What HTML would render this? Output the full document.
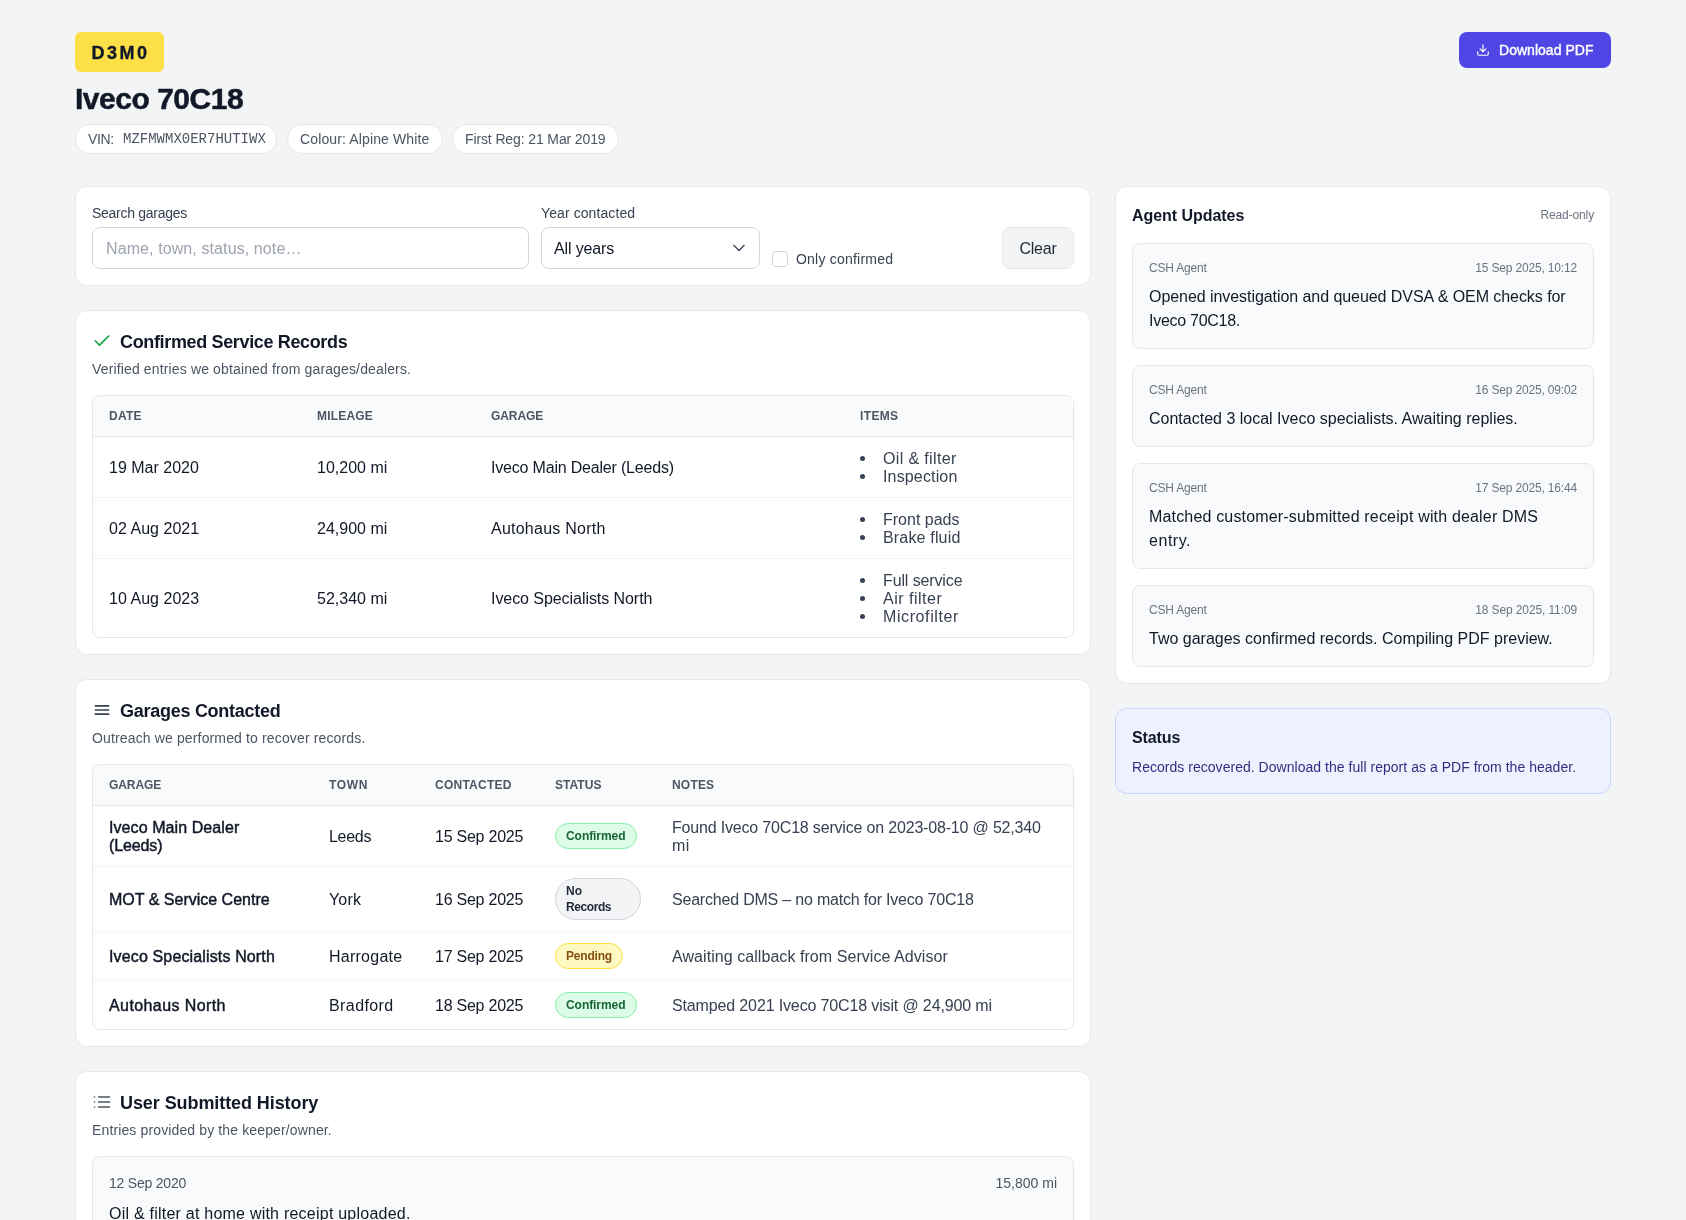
<!DOCTYPE html>
<html lang="en"><head>
<meta charset="utf-8">
<title>Iveco 70C18</title>
<style>
*{box-sizing:border-box;margin:0;padding:0}
html,body{width:1686px;height:1220px;overflow:hidden}
body{background:#f3f4f6;font-family:"Liberation Sans",sans-serif;color:#111827;line-height:1.5;-webkit-font-smoothing:antialiased;position:relative}
.abs{position:absolute}
.page{position:absolute;left:75px;top:0;width:1536px;height:1220px;will-change:transform}
.plate{position:absolute;left:0;top:32px;width:89px;height:40px;background:#fde047;border-radius:6px;font-weight:700;font-size:18px;letter-spacing:2.5px;line-height:42px;text-align:center;color:#111827;padding-left:2px;-webkit-text-stroke:0.35px #111827}
.h1{position:absolute;left:0;top:81px;font-size:30px;line-height:36px;font-weight:700;color:#111827;white-space:nowrap;-webkit-text-stroke:0.5px #111827}
.chip{position:absolute;top:124px;height:30px;border:1px solid #e5e7eb;background:#fff;border-radius:9999px;font-size:14px;line-height:28px;color:#4b5563;white-space:nowrap}
.chip>span{position:absolute;top:0}
.mono{font-family:"Liberation Mono",monospace;font-size:14px;color:#4b5563}
.dl{position:absolute;left:1384px;top:32px;width:152px;height:36px;background:#4f46e5;border-radius:8px;color:#fff;font-size:14px;font-weight:400;-webkit-text-stroke:0.4px #fff;line-height:36px;white-space:nowrap}
.dl svg{position:absolute;left:16.5px;top:10.5px}
.dl>span{position:absolute;left:40px;top:0}
.card{position:absolute;background:#fff;border:1px solid #e5e7eb;border-radius:12px;overflow:hidden}
.lbl{position:absolute;font-size:14px;line-height:20px;color:#374151;white-space:nowrap}
.inp{position:absolute;height:42px;border:1px solid #d1d5db;border-radius:8px;background:#fff;font-size:16px;line-height:42px;white-space:nowrap}
.btn{position:absolute;height:42px;border:1px solid #e5e7eb;border-radius:8px;background:#f3f4f6;font-size:16px;line-height:42px;color:#1f2937;text-align:center}
.cb{position:absolute;width:16px;height:16px;border:1px solid #d1d5db;border-radius:4px;background:#fff}
.ctitle{position:absolute;left:44px;top:17px;font-size:18px;line-height:28px;font-weight:700;color:#111827;white-space:nowrap}
.csub{position:absolute;left:16px;top:48px;font-size:14px;line-height:20px;color:#4b5563;white-space:nowrap}
.icon{position:absolute;left:16px;top:20px}
.tbl{position:absolute;left:16px;top:84px;width:982px;border:1px solid #e5e7eb;border-radius:8px;overflow:hidden}
.th{position:relative;height:41px;background:#f9fafb;border-bottom:1px solid #e5e7eb}
.th>div{position:absolute;top:12px;font-size:12px;line-height:16px;font-weight:700;letter-spacing:0.6px;color:#4b5563;white-space:nowrap}
.tr{position:relative;border-bottom:1px solid #f3f4f6}
.tr.last{border-bottom:0}
.td{position:absolute;margin-top:1px;font-size:16px;line-height:18px;color:#111827;white-space:nowrap}
.items{position:absolute;margin-top:1px;font-size:16px;line-height:18px;color:#374151;white-space:nowrap}
.items>div{position:relative;padding-left:23px}
.items>div:before{content:"";position:absolute;left:0px;top:6px;width:5px;height:5px;border-radius:50%;background:#374151}
.badge{position:absolute;border-radius:9999px;font-size:12px;line-height:16px;font-weight:700;white-space:nowrap;border:1px solid}
.b-ok{background:#dcfce7;border-color:#86efac;color:#166534}
.b-pend{background:#fef9c3;border-color:#fde047;color:#854d0e}
.b-none{background:#f3f4f6;border-color:#d1d5db;color:#1f2937}
.note{position:absolute;margin-top:1px;font-size:16px;line-height:18px;color:#374151;white-space:nowrap}
.gname{position:absolute;margin-top:1px;font-size:16px;line-height:18px;color:#111827;font-weight:400;-webkit-text-stroke:0.45px #111827;white-space:nowrap}
.ubox{position:absolute;background:#f9fafb;border:1px solid #e5e7eb;border-radius:8px}
.meta{position:absolute;top:16px;font-size:12px;line-height:16px;color:#6b7280;white-space:nowrap}
.msg{position:absolute;left:16px;top:41px;font-size:16px;line-height:24px;color:#111827;white-space:nowrap}
</style>
</head>
<body>
<div class="page">
  <div class="plate">D3M0</div>
  <div class="h1"><span style="letter-spacing: -0.48px;">Iveco 70C18</span></div>
  <div class="chip" style="left:0;width:202px"><span style="left:12px"><span style="letter-spacing: -0.33px;">VIN:</span></span><span class="mono" style="left:47px">MZFMWMX0ER7HUTIWX</span></div>
  <div class="chip" style="left:212px;width:156px"><span style="left:12px"><span style="letter-spacing: 0.13px;">Colour: Alpine White</span></span></div>
  <div class="chip" style="left:377px;width:167px"><span style="left:12px"><span style="letter-spacing: -0.12px;">First Reg: 21 Mar 2019</span></span></div>
  <div class="dl"><svg width="14" height="14" viewBox="0 0 24 24" fill="none" stroke="#fff" stroke-width="2" stroke-linecap="round" stroke-linejoin="round"><path d="M21 15v4a2 2 0 0 1-2 2H5a2 2 0 0 1-2-2v-4M7 10l5 5 5-5M12 15V3"></path></svg><span><span style="letter-spacing: 0.03px;">Download PDF</span></span></div>

  <!-- Filter card -->
  <div class="card" style="left:0;top:186px;width:1016px;height:100px">
    <div class="lbl" style="left:16px;top:16px"><span style="letter-spacing: -0.28px;">Search garages</span></div>
    <div class="inp" style="left:16px;top:40px;width:437px;padding-left:13px;color:#9ca3af"><span style="letter-spacing: 0.1px;">Name, town, status, note…</span></div>
    <div class="lbl" style="left:465px;top:16px"><span style="letter-spacing: 0.09px;">Year contacted</span></div>
    <div class="inp" style="left:465px;top:40px;width:219px;padding-left:12px;color:#111827"><span style="letter-spacing: -0.13px;">All years
      </span><svg class="abs" style="left:187px;top:10px" width="20" height="20" viewBox="0 0 24 24" fill="none" stroke="#4b5563" stroke-width="2" stroke-linecap="round" stroke-linejoin="round"><path d="M6 9l6 6 6-6"></path></svg>
    </div>
    <div class="cb" style="left:696px;top:64px"></div>
    <div class="lbl" style="left:720px;top:62px"><span style="letter-spacing: 0.22px;">Only confirmed</span></div>
    <div class="btn" style="left:926px;top:40px;width:72px"><span style="letter-spacing: -0.22px;">Clear</span></div>
  </div>

  <!-- Confirmed Service Records -->
  <div class="card" style="left:0;top:310px;width:1016px;height:345px">
    <svg class="icon" width="20" height="20" viewBox="0 0 24 24" fill="none" stroke="#16a34a" stroke-width="2" stroke-linecap="round" stroke-linejoin="round"><path d="M20 6L9 17l-5-5"></path></svg>
    <div class="ctitle"><span style="letter-spacing: -0.35px;">Confirmed Service Records</span></div>
    <div class="csub"><span style="letter-spacing: 0.14px;">Verified entries we obtained from garages/dealers.</span></div>
    <div class="tbl" style="height:243px">
      <div class="th">
        <div style="left:16px"><span style="letter-spacing: 0.25px;">DATE</span></div>
        <div style="left:224px"><span style="letter-spacing: 0.18px;">MILEAGE</span></div>
        <div style="left:398px"><span style="letter-spacing: -0.08px;">GARAGE</span></div>
        <div style="left:767px"><span style="letter-spacing: 0.36px;">ITEMS</span></div>
      </div>
      <div class="tr" style="height:61px">
        <div class="td" style="left:16px;top:21px">19 Mar 2020</div>
        <div class="td" style="left:224px;top:21px">10,200 mi</div>
        <div class="td" style="left:398px;top:21px"><span style="letter-spacing: -0.19px;">Iveco Main Dealer (Leeds)</span></div>
        <div class="items" style="left:767px;top:12px"><div><span style="letter-spacing: 0.36px;">Oil &amp; filter</span></div><div><span style="letter-spacing: 0.15px;">Inspection</span></div></div>
      </div>
      <div class="tr" style="height:61px">
        <div class="td" style="left:16px;top:21px"><span style="letter-spacing: 0.03px;">02 Aug 2021</span></div>
        <div class="td" style="left:224px;top:21px">24,900 mi</div>
        <div class="td" style="left:398px;top:21px"><span style="letter-spacing: 0.24px;">Autohaus North</span></div>
        <div class="items" style="left:767px;top:12px"><div>Front pads</div><div><span style="letter-spacing: 0.17px;">Brake fluid</span></div></div>
      </div>
      <div class="tr last" style="height:78px">
        <div class="td" style="left:16px;top:30px"><span style="letter-spacing: 0.03px;">10 Aug 2023</span></div>
        <div class="td" style="left:224px;top:30px">52,340 mi</div>
        <div class="td" style="left:398px;top:30px"><span style="letter-spacing: -0.06px;">Iveco Specialists North</span></div>
        <div class="items" style="left:767px;top:12px"><div><span style="letter-spacing: -0.12px;">Full service</span></div><div><span style="letter-spacing: 0.51px;">Air filter</span></div><div><span style="letter-spacing: 0.6px;">Microfilter</span></div></div>
      </div>
    </div>
  </div>

  <!-- Garages Contacted -->
  <div class="card" style="left:0;top:679px;width:1016px;height:368px">
    <svg class="icon" width="20" height="20" viewBox="0 0 24 24" fill="none" stroke="#374151" stroke-width="2" stroke-linecap="round" stroke-linejoin="round"><path d="M4 7h16M4 12h16M4 17h16"></path></svg>
    <div class="ctitle"><span style="letter-spacing: -0.27px;">Garages Contacted</span></div>
    <div class="csub"><span style="letter-spacing: 0.14px;">Outreach we performed to recover records.</span></div>
    <div class="tbl" style="height:266px">
      <div class="th">
        <div style="left:16px"><span style="letter-spacing: -0.08px;">GARAGE</span></div>
        <div style="left:236px"><span style="letter-spacing: 0.63px;">TOWN</span></div>
        <div style="left:342px"><span style="letter-spacing: 0.25px;">CONTACTED</span></div>
        <div style="left:462px"><span style="letter-spacing: 0.05px;">STATUS</span></div>
        <div style="left:579px"><span style="letter-spacing: 0.19px;">NOTES</span></div>
      </div>
      <div class="tr" style="height:61px">
        <div class="gname" style="left:16px;top:12px"><span style="letter-spacing: 0.08px;">Iveco Main Dealer</span><br><span style="letter-spacing: -0.13px;">(Leeds)</span></div>
        <div class="td" style="left:236px;top:21px"><span style="letter-spacing: -0.29px;">Leeds</span></div>
        <div class="td" style="left:342px;top:21px"><span style="letter-spacing: -0.24px;">15 Sep 2025</span></div>
        <div class="badge b-ok" style="left:462px;top:17px;height:26px;width:82px;padding:4px 0 0 10px"><span style="letter-spacing: -0.06px;">Confirmed</span></div>
        <div class="note" style="left:579px;top:12px"><span style="letter-spacing: -0.18px;">Found Iveco 70C18 service on 2023-08-10 @ 52,340</span><br><span style="letter-spacing: 0.41px;">mi</span></div>
      </div>
      <div class="tr" style="height:65px">
        <div class="gname" style="left:16px;top:23px">MOT &amp; Service Centre</div>
        <div class="td" style="left:236px;top:23px"><span style="letter-spacing: 0.16px;">York</span></div>
        <div class="td" style="left:342px;top:23px"><span style="letter-spacing: -0.24px;">16 Sep 2025</span></div>
        <div class="badge b-none" style="left:462px;top:11px;height:42px;width:86px;padding:4px 0 0 10px"><span style="letter-spacing: 0.09px;">No</span><br><span style="letter-spacing: -0.42px;">Records</span></div>
        <div class="note" style="left:579px;top:23px"><span style="letter-spacing: -0.2px;">Searched DMS – no match for Iveco 70C18</span></div>
      </div>
      <div class="tr" style="height:49px">
        <div class="gname" style="left:16px;top:15px"><span style="letter-spacing: 0.14px;">Iveco Specialists North</span></div>
        <div class="td" style="left:236px;top:15px"><span style="letter-spacing: 0.25px;">Harrogate</span></div>
        <div class="td" style="left:342px;top:15px"><span style="letter-spacing: -0.24px;">17 Sep 2025</span></div>
        <div class="badge b-pend" style="left:462px;top:11px;height:26px;width:68px;padding:4px 0 0 10px"><span style="letter-spacing: -0.2px;">Pending</span></div>
        <div class="note" style="left:579px;top:15px"><span style="letter-spacing: 0.06px;">Awaiting callback from Service Advisor</span></div>
      </div>
      <div class="tr last" style="height:48px">
        <div class="gname" style="left:16px;top:15px"><span style="letter-spacing: 0.41px;">Autohaus North</span></div>
        <div class="td" style="left:236px;top:15px"><span style="letter-spacing: 0.41px;">Bradford</span></div>
        <div class="td" style="left:342px;top:15px"><span style="letter-spacing: -0.24px;">18 Sep 2025</span></div>
        <div class="badge b-ok" style="left:462px;top:11px;height:26px;width:82px;padding:4px 0 0 10px"><span style="letter-spacing: -0.06px;">Confirmed</span></div>
        <div class="note" style="left:579px;top:15px"><span style="letter-spacing: -0.14px;">Stamped 2021 Iveco 70C18 visit @ 24,900 mi</span></div>
      </div>
    </div>
  </div>

  <!-- User Submitted History -->
  <div class="card" style="left:0;top:1071px;width:1016px;height:300px">
    <svg class="icon" width="20" height="20" viewBox="0 0 24 24" fill="none" stroke="#4b5563" stroke-width="2" stroke-linecap="round" stroke-linejoin="round"><path d="M8 6h13M8 12h13M8 18h13M3 6h.01M3 12h.01M3 18h.01"></path></svg>
    <div class="ctitle"><span style="letter-spacing: -0.08px;">User Submitted History</span></div>
    <div class="csub"><span style="letter-spacing: 0.13px;">Entries provided by the keeper/owner.</span></div>
    <div class="ubox" style="left:16px;top:84px;width:982px;height:120px">
      <div class="abs" style="left:16px;top:16px;font-size:14px;line-height:20px;color:#4b5563"><span style="letter-spacing: -0.21px;">12 Sep 2020</span></div>
      <div class="abs" style="right:16px;top:16px;font-size:14px;line-height:20px;color:#4b5563">15,800 mi</div>
      <div class="abs" style="left:16px;top:45px;font-size:16px;line-height:24px;color:#111827;white-space:nowrap"><span style="letter-spacing: 0.23px;">Oil &amp; filter at home with receipt uploaded.</span></div>
    </div>
  </div>

  <!-- Agent Updates -->
  <div class="card" style="left:1040px;top:186px;width:496px;height:498px">
    <div class="abs semi" style="left:16px;top:17px;font-size:16px;line-height:24px;font-weight:700;color:#111827"><span style="letter-spacing: -0.05px;">Agent Updates</span></div>
    <div class="abs" style="right:16px;top:20px;font-size:12px;line-height:16px;color:#6b7280"><span style="letter-spacing: -0.13px;">Read-only</span></div>
    <div class="ubox" style="left:16px;top:56px;width:462px;height:106px">
      <div class="meta" style="left:16px"><span style="letter-spacing: -0.18px;">CSH Agent</span></div><div class="meta" style="right:16px"><span style="letter-spacing: -0.17px;">15 Sep 2025, 10:12</span></div>
      <div class="msg"><span style="letter-spacing: -0.06px;">Opened investigation and queued DVSA &amp; OEM checks for</span><br><span style="letter-spacing: -0.28px;">Iveco 70C18.</span></div>
    </div>
    <div class="ubox" style="left:16px;top:178px;width:462px;height:82px">
      <div class="meta" style="left:16px"><span style="letter-spacing: -0.18px;">CSH Agent</span></div><div class="meta" style="right:16px"><span style="letter-spacing: -0.17px;">16 Sep 2025, 09:02</span></div>
      <div class="msg">Contacted 3 local Iveco specialists. Awaiting replies.</div>
    </div>
    <div class="ubox" style="left:16px;top:276px;width:462px;height:106px">
      <div class="meta" style="left:16px"><span style="letter-spacing: -0.18px;">CSH Agent</span></div><div class="meta" style="right:16px"><span style="letter-spacing: -0.17px;">17 Sep 2025, 16:44</span></div>
      <div class="msg"><span style="letter-spacing: 0.17px;">Matched customer-submitted receipt with dealer DMS</span><br><span style="letter-spacing: 0.54px;">entry.</span></div>
    </div>
    <div class="ubox" style="left:16px;top:398px;width:462px;height:82px">
      <div class="meta" style="left:16px"><span style="letter-spacing: -0.18px;">CSH Agent</span></div><div class="meta" style="right:16px"><span style="letter-spacing: -0.12px;">18 Sep 2025, 11:09</span></div>
      <div class="msg">Two garages confirmed records. Compiling PDF preview.</div>
    </div>
  </div>

  <!-- Status -->
  <div class="card" style="left:1040px;top:708px;width:496px;height:86px;background:#eef2ff;border-color:#c7d2fe">
    <div class="abs semi" style="left:16px;top:17px;font-size:16px;line-height:24px;font-weight:700;color:#111827"><span style="letter-spacing: -0.11px;">Status</span></div>
    <div class="abs" style="left:16px;top:48px;font-size:14px;line-height:20px;color:#312e81;white-space:nowrap"><span style="letter-spacing: 0.03px;">Records recovered. Download the full report as a PDF from the header.</span></div>
  </div>
</div>


</body></html>
